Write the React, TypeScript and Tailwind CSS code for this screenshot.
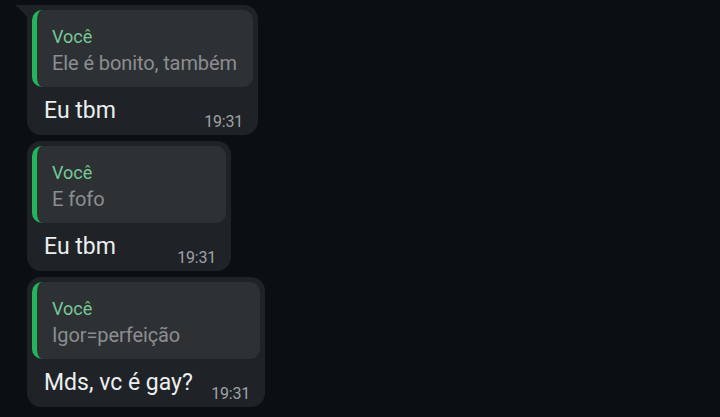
import React from 'react';

type Msg = {
  quote: string;
  text: string;
  time: string;
  width: string;
  tail?: boolean;
};

const messages: Msg[] = [
  { quote: 'Ele é bonito, também', text: 'Eu tbm', time: '19:31', width: 'w-[231px]', tail: true },
  { quote: 'E fofo', text: 'Eu tbm', time: '19:31', width: 'w-[204px]' },
  { quote: 'Igor=perfeição', text: 'Mds, vc é gay?', time: '19:31', width: 'w-[238px]' },
];

const Bubble = ({ msg }: { msg: Msg }) => (
  <div
    className={`relative ${msg.width} bg-[#1f2327] rounded-[14px] ${
      msg.tail ? 'rounded-tl-none' : ''
    } px-[5px] pt-[5px] pb-[3px]`}
  >
    {msg.tail && (
      <svg
        className="absolute left-[-12px] top-0"
        width="13"
        height="14"
        viewBox="0 0 13 14"
      >
        <path d="M0 0 H13 V14 C10 9 5 4 1.5 1.6 C0.6 1 0 0.6 0 0 Z" fill="#1f2327" />
      </svg>
    )}
    <div className="h-[77px] rounded-[10px] bg-[#2e3134] border-l-[5px] border-[#23b45c] pl-[15px] pt-[14px] pr-[10px]">
      <div className="text-[18px] leading-[25px] text-[#74c997]">Você</div>
      <div className="text-[20px] leading-[28px] text-[#8b8e91] whitespace-nowrap tracking-[-0.1px]">
        {msg.quote}
      </div>
    </div>
    <div className="mt-[8px] flex items-start justify-between pl-[12px] pr-[10px]">
      <span className="text-[23px] leading-[31px] text-[#eceeef]">{msg.text}</span>
      <span className="mt-[17px] text-[16px] leading-[20px] text-[#9ea2a5] tracking-[-0.2px]">
        {msg.time}
      </span>
    </div>
  </div>
);

export default function App() {
  return (
    <div
      className="w-[720px] h-[417px] overflow-hidden bg-[#0b0e12] pl-[27px] pt-[5px] flex flex-col gap-[6px]"
      style={{ fontFamily: 'Roboto, "Noto Sans", sans-serif' }}
    >
      {messages.map((m, i) => (
        <Bubble key={i} msg={m} />
      ))}
    </div>
  );
}
